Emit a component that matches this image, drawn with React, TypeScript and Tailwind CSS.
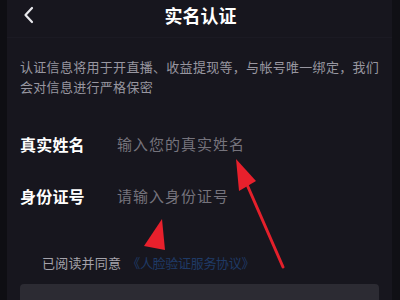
import React from 'react';

const font = { fontFamily: '"Noto Sans CJK SC", "Noto Sans", sans-serif' };

export default function App() {
  return (
    <div className="relative w-[400px] h-[300px] overflow-hidden bg-[#17161e] flex" style={font}>
      <div className="w-[7px] bg-[#0e0e13]" />
      <div className="flex-1 flex flex-col overflow-hidden">
        {/* header */}
        <div className="shrink-0 h-[38px] flex items-center relative border-b border-[#1b1a23]">
          <svg className="absolute left-[15px] top-[6px]" width="14" height="18" viewBox="0 0 14 18">
            <path d="M10 2 L3.5 9 L10 16" stroke="#e8e8ec" strokeWidth="2.2" fill="none" strokeLinecap="round" strokeLinejoin="round" />
          </svg>
          <div className="flex-1 text-center text-[18px] font-bold text-white pl-[2px] pb-[8px] leading-none pt-[1px]">
            实名认证
          </div>
        </div>

        {/* description */}
        <div className="shrink-0 pl-[13px] pr-[6px] pt-[19px] text-[13px] leading-[20px] tracking-[0.3px] text-[#9896a0]">
          <p className="whitespace-nowrap">认证信息将用于开直播、收益提现等，与帐号唯一绑定，我们</p>
          <p>会对信息进行严格保密</p>
        </div>

        {/* form */}
        <div className="shrink-0 mt-[21px] flex flex-col">
          <div className="h-[52px] flex items-center pl-[13px]">
            <span className="w-[97px] text-[16px] font-bold text-white tracking-[0.2px]">真实姓名</span>
            <span className="text-[15px] tracking-[1px] text-[#75737c]">输入您的真实姓名</span>
          </div>
          <div className="h-[52px] flex items-center pl-[13px]">
            <span className="w-[97px] text-[16px] font-bold text-white tracking-[0.2px]">身份证号</span>
            <span className="text-[15px] tracking-[1px] text-[#75737c]">请输入身份证号</span>
          </div>
        </div>

        {/* agreement */}
        <div className="shrink-0 mt-[31px] flex items-center pl-[35px] h-[20px]">
          <span className="text-[13px] text-[#a5a3ab] tracking-[0.2px]">已阅读并同意</span>
          <span className="ml-[6px] text-[13px] text-[#1f3a66] tracking-[-0.3px]">《人脸验证服务协议》</span>
        </div>

        {/* button */}
        <div className="shrink-0 mt-[11px] mx-[13px] h-[40px] rounded-[4px] bg-[#2c2b33]" />
      </div>
      <div className="w-[8px] bg-[#101015]" />

      {/* red annotation arrows */}
      <svg className="absolute inset-0 pointer-events-none" width="400" height="300" viewBox="0 0 400 300">
        <line x1="245" y1="180" x2="283" y2="267" stroke="#e4202b" strokeWidth="3" strokeLinecap="round" />
        <polygon points="236,159 239,191 256,181" fill="#e8202c" />
        <polygon points="162,219 144,246 165,250" fill="#e8202c" />
      </svg>
    </div>
  );
}
